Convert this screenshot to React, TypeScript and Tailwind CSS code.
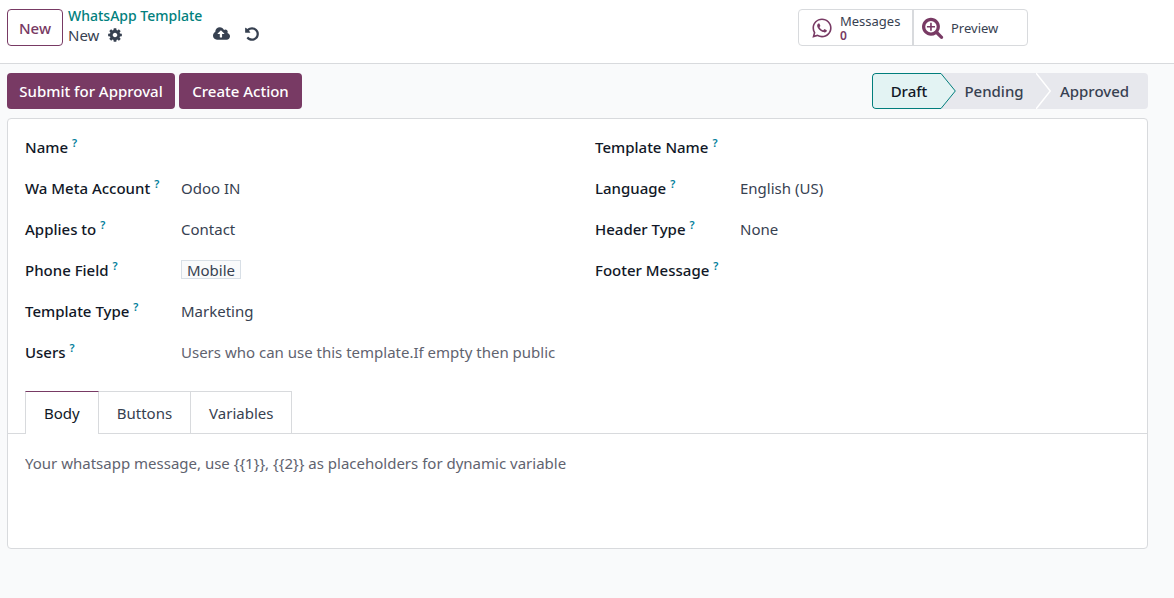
import React, { useState } from "react";
import { FaWhatsapp } from "react-icons/fa";

const ICONS = {
  cog: {
    box: "0 0 1792 1792",
    d: "M1152 896q0-106-75-181t-181-75-181 75-75 181 75 181 181 75 181-75 75-181zm512-109v222q0 12-8 23t-20 13l-185 28q-19 54-39 91 35 50 107 138 10 12 10 25t-9 23q-27 37-99 108t-94 71q-12 0-26-9l-138-108q-44 23-91 38-16 136-29 186-7 28-36 28h-222q-14 0-24.5-8.5t-11.5-21.5l-28-184q-49-16-90-37l-141 107q-10 9-25 9-14 0-25-11-126-114-165-168-7-10-7-23 0-12 8-23 15-21 51-66.5t54-70.5q-27-50-41-99l-183-27q-13-2-21-12.5t-8-23.5v-222q0-12 8-23t19-13l186-28q14-46 39-92-40-57-107-138-10-12-10-24 0-10 9-23 26-36 98.5-107.5t94.5-71.5q13 0 26 10l138 107q44-23 91-38 16-136 29-186 7-28 36-28h222q14 0 24.5 8.5t11.5 21.5l28 184q49 16 90 37l142-107q9-9 24-9 13 0 25 10 129 119 165 170 7 8 7 22 0 12-8 23-15 21-51 66.5t-54 70.5q26 50 41 98l183 28q13 2 21 12.5t8 23.5z",
  },
  upload: {
    box: "0 0 1920 1792",
    d: "M1280 864q0-14-9-23l-352-352q-9-9-23-9t-23 9l-351 351q-10 12-10 24 0 14 9 23t23 9h224v352q0 13 9.5 22.5t22.5 9.5h192q13 0 22.5-9.5t9.5-22.5v-352h224q13 0 22.5-9.5t9.5-22.5zm640 288q0 159-112.5 271.5t-271.5 112.5h-1088q-185 0-316.5-131.5t-131.5-316.5q0-130 70-240t188-165q-2-30-2-43 0-212 150-362t362-150q156 0 285.5 87t188.5 231q71-62 166-62 106 0 181 75t75 181q0 76-41 138 130 31 213.5 135.5t83.5 238.5z",
  },
  undo: {
    box: "0 0 1792 1792",
    d: "M1664 896q0 156-61 298t-164 245-245 164-298 61q-172 0-327-72.5t-264-204.5q-7-10-6.5-22.5t8.5-20.5l137-138q10-9 25-9 16 2 23 12 73 95 179 147t225 52q104 0 198.5-40.5t163.5-109.5 109.5-163.5 40.5-198.5-40.5-198.5-109.5-163.5-163.5-109.5-198.5-40.5q-98 0-188 35.5t-160 101.5l137 138q31 30 14 69-17 40-59 40h-448q-26 0-45-19t-19-45v-448q0-42 40-59 39-17 69 14l130 129q107-101 244.5-156.5t284.5-55.5q156 0 298 61t245 164 164 245 61 298z",
  },
  zoomIn: {
    box: "64 64 1728 1728",
    d: "M1088 800v64q0 13-9.5 22.5t-22.5 9.5h-224v224q0 13-9.5 22.5t-22.5 9.5h-64q-13 0-22.5-9.5t-9.5-22.5v-224h-224q-13 0-22.5-9.5t-9.5-22.5v-64q0-13 9.5-22.5t22.5-9.5h224v-224q0-13 9.5-22.5t22.5-9.5h64q13 0 22.5 9.5t9.5 22.5v224h224q13 0 22.5 9.5t9.5 22.5zm128 32q0-185-131.5-316.5t-316.5-131.5-316.5 131.5-131.5 316.5 131.5 316.5 316.5 131.5 316.5-131.5 131.5-316.5zm512 832q0 53-37.5 90.5t-90.5 37.5q-54 0-90-38l-343-342q-179 124-399 124-143 0-273.5-55.5t-225-150-150-225-55.5-273.5 55.5-273.5 150-225 225-150 273.5-55.5 273.5 55.5 225 150 150 225 55.5 273.5q0 220-124 399l343 343q37 37 37 90z",
  },
};

function Icon({ name, className }: { name: keyof typeof ICONS; className: string }) {
  return (
    <svg viewBox={ICONS[name].box} className={className} fill="currentColor" aria-hidden="true">
      <path d={ICONS[name].d} />
    </svg>
  );
}

function Field({
  id,
  label,
  labelWidth,
  children,
}: {
  id: string;
  label: string;
  labelWidth: string;
  children: React.ReactNode;
}) {
  return (
    <div className="flex h-[41px] items-center">
      <label htmlFor={id} className={`flex shrink-0 gap-1 whitespace-nowrap font-medium text-[#111827] ${labelWidth}`}>
        {label}
        <span className="text-[11px] leading-3 font-semibold text-[#017e9b]">?</span>
      </label>
      {children}
    </div>
  );
}

const control = "min-w-0 flex-1 appearance-none bg-transparent outline-none placeholder:text-[#5f636f]";
const left = "w-[156px]";
const right = "w-[145px]";
const tabs = ["Body", "Buttons", "Variables"];

export default function App() {
  const [tab, setTab] = useState("Body");
  return (
    <div className="min-h-screen bg-[#f9fafb] font-['Noto_Sans',sans-serif] text-[15px] leading-5 text-[#374151]">
      <header className="flex h-16 items-start border-b border-[#d8dadd] bg-white pt-[9px] pr-[146px] pl-[7px]">
        <button className="h-[37px] w-14 rounded border border-[#783a64] font-medium text-[#783a64]">New</button>
        <div className="ml-[5px] flex w-[145px] flex-col">
          <a href="#templates" className="h-4 text-sm leading-[14px] font-medium whitespace-nowrap text-[#01807d]">
            WhatsApp Template
          </a>
          <div className="flex h-5 items-center gap-2">
            <span>New</span>
            <button aria-label="Settings">
              <Icon name="cog" className="size-4" />
            </button>
          </div>
        </div>
        <div className="flex h-[50px] items-center gap-[14px]">
          <button aria-label="Save">
            <Icon name="upload" className="h-4 w-[17px]" />
          </button>
          <button aria-label="Discard">
            <Icon name="undo" className="size-4" />
          </button>
        </div>
        <div className="ml-auto flex h-[37px] rounded border border-[#d8dadd] text-[13px]">
          <button className="flex w-[115px] items-center gap-[7px] border-r-2 border-[#d8dadd] pl-3 text-left">
            <FaWhatsapp className="size-[22px] text-[#783a64]" />
            <span className="flex flex-col">
              <span className="leading-4">Messages</span>
              <span className="text-xs leading-[14px] font-semibold text-[#783a64]">0</span>
            </span>
          </button>
          <button className="flex w-[113px] items-center gap-[7px] pl-2">
            <Icon name="zoomIn" className="size-[22px] text-[#783a64]" />
            Preview
          </button>
        </div>
      </header>

      <main className="pt-[9px] pr-[26px] pl-[7px]">
        <div className="flex h-9 justify-between">
          <div className="flex gap-1 font-medium text-white">
            <button className="w-[168px] rounded bg-[#783a64]">Submit for Approval</button>
            <button className="w-[123px] rounded bg-[#783a64]">Create Action</button>
          </div>
          <div className="flex overflow-hidden rounded bg-[#e7e8ed] font-medium">
            <button className="w-[69px] rounded-l border border-r-0 border-[#017e7c] bg-[#e3f3f3] pl-1 text-[#111827]">
              Draft
            </button>
            <svg viewBox="0 0 15 36" className="h-9 w-[15px]" aria-hidden="true">
              <path d="M0 .5 14.3 18 0 35.5" fill="#e3f3f3" stroke="#017e7c" />
            </svg>
            <button className="w-20 pr-1">Pending</button>
            <svg viewBox="0 0 15 36" className="h-9 w-[15px]" aria-hidden="true">
              <path d="M0 0 14.3 18 0 36" fill="none" stroke="#fff" strokeWidth="1.5" />
            </svg>
            <button className="w-[97px] pr-[10px]">Approved</button>
          </div>
        </div>

        <section className="mt-[9px] rounded border border-[#d8dadd] bg-white">
          <div className="grid grid-cols-2 gap-x-[35px] px-[17px] pt-[7px]">
            <div>
              <Field id="name" label="Name" labelWidth={left}>
                <input id="name" className={control} />
              </Field>
              <Field id="account" label="Wa Meta Account" labelWidth={left}>
                <input id="account" defaultValue="Odoo IN" className={control} />
              </Field>
              <Field id="applies" label="Applies to" labelWidth={left}>
                <input id="applies" defaultValue="Contact" className={control} />
              </Field>
              <Field id="phone" label="Phone Field" labelWidth={left}>
                <button
                  id="phone"
                  className="flex h-[19px] w-[60px] items-center justify-center border border-[#d8dfe6] bg-[#f9fafb]"
                >
                  Mobile
                </button>
              </Field>
              <Field id="type" label="Template Type" labelWidth={left}>
                <select id="type" className={control}>
                  <option>Marketing</option>
                  <option>Utility</option>
                </select>
              </Field>
              <Field id="users" label="Users" labelWidth={left}>
                <input
                  id="users"
                  placeholder="Users who can use this template.If empty then public"
                  className={control}
                />
              </Field>
            </div>
            <div>
              <Field id="template" label="Template Name" labelWidth={right}>
                <input id="template" className={control} />
              </Field>
              <Field id="language" label="Language" labelWidth={right}>
                <select id="language" className={control}>
                  <option>English (US)</option>
                </select>
              </Field>
              <Field id="header" label="Header Type" labelWidth={right}>
                <select id="header" className={control}>
                  <option>None</option>
                </select>
              </Field>
              <Field id="footer" label="Footer Message" labelWidth={right}>
                <input id="footer" className={control} />
              </Field>
            </div>
          </div>

          <div role="tablist" className="mt-[19px] flex h-[43px]">
            <div className="w-[17px] border-b border-[#d8dadd]" />
            {tabs.map((name) => (
              <button
                key={name}
                role="tab"
                aria-selected={tab === name}
                onClick={() => setTab(name)}
                className={`border-t border-r px-[18px] first-of-type:border-l ${
                  tab === name
                    ? "border-x-[#d8dadd] border-t-[#783a64] text-[#111827]"
                    : "border-b border-[#d8dadd]"
                }`}
              >
                {name}
              </button>
            ))}
            <div className="flex-1 border-b border-[#d8dadd]" />
          </div>
          <div className="px-[17px] pt-[19px] pb-[15px]">
            <textarea
              aria-label="Body"
              placeholder="Your whatsapp message, use {{1}}, {{2}} as placeholders for dynamic variable"
              className="block h-20 w-full resize-none outline-none placeholder:text-[#5f636f]"
            />
          </div>
        </section>
      </main>
    </div>
  );
}
